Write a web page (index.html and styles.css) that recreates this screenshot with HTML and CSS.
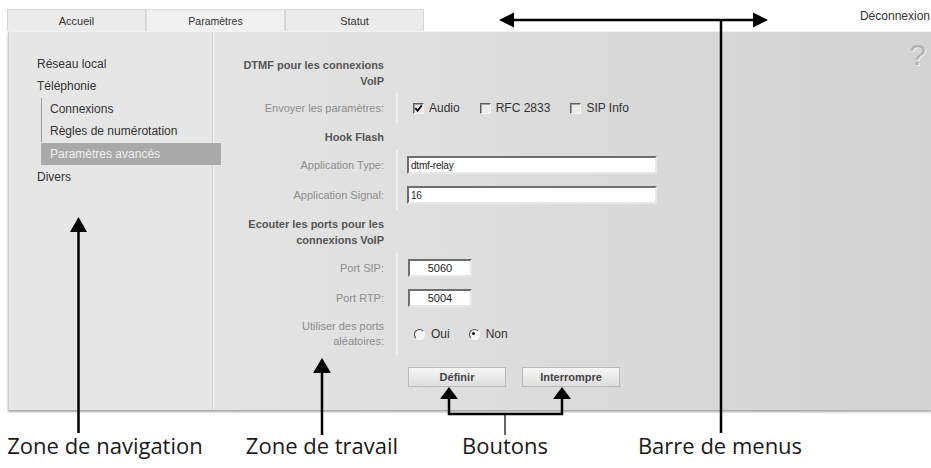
FILE: index.html
```html
<!DOCTYPE html>
<html lang="fr">
<head>
<meta charset="utf-8">
<title>Paramètres – Téléphonie</title>
<link rel="stylesheet" href="styles.css">
</head>
<body>
<div class="page">
  <div class="topbar">
    <nav class="tabs">
      <span class="tab">Accueil</span>
      <span class="tab active">Paramètres</span>
      <span class="tab">Statut</span>
    </nav>
    <span class="logout">Déconnexion</span>
  </div>

  <div class="panel">
    <aside class="nav">
      <div class="nav-item">Réseau local</div>
      <div class="nav-item">Téléphonie</div>
      <div class="subnav">
        <div class="sub-item">Connexions</div>
        <div class="sub-item">Règles de numérotation</div>
        <div class="sub-item active">Paramètres avancés</div>
      </div>
      <div class="nav-item">Divers</div>
    </aside>

    <main class="work">
      <div class="form">
        <div class="label head">DTMF pour les connexions<br>VoIP</div>
        <div class="blank"></div>

        <div class="label">Envoyer les paramètres:</div>
        <div class="field">
          <span class="opt"><span class="check"><svg viewBox="0 0 9 9" width="9" height="9"><path d="M1.3 4.2 L3.6 6.8 L7.8 1.4" stroke="#111" stroke-width="1.9" fill="none"/></svg></span>Audio</span>
          <span class="opt"><span class="check"></span>RFC 2833</span>
          <span class="opt"><span class="check"></span>SIP Info</span>
        </div>

        <div class="label head">Hook Flash</div>
        <div class="blank"></div>

        <div class="label">Application Type:</div>
        <div class="field"><input class="txt" type="text" value="dtmf-relay" readonly></div>

        <div class="label">Application Signal:</div>
        <div class="field"><input class="txt" type="text" value="16" readonly></div>

        <div class="label head">Ecouter les ports pour les<br>connexions VoIP</div>
        <div class="blank"></div>

        <div class="label">Port SIP:</div>
        <div class="field"><input class="port" type="text" value="5060" readonly></div>

        <div class="label">Port RTP:</div>
        <div class="field"><input class="port" type="text" value="5004" readonly></div>

        <div class="label">Utiliser des ports<br>aléatoires:</div>
        <div class="field">
          <span class="opt radio-opt"><span class="radio"></span>Oui</span>
          <span class="opt radio-opt"><span class="radio on"></span>Non</span>
        </div>

        <div class="blank"></div>
        <div class="buttons">
          <button class="btn" type="button">Définir</button>
          <button class="btn" type="button">Interrompre</button>
        </div>
      </div>
      <div class="help">?</div>
    </main>
  </div>

  <div class="notes">
    <svg class="arrows" width="931" height="468" viewBox="0 0 931 468">
      <g stroke="#000" stroke-width="2.5" fill="none">
        <line x1="78.5" y1="230" x2="78.5" y2="433"/>
        <line x1="322" y1="370" x2="322" y2="435"/>
        <polyline points="449,397 449,414 562,414 562,397"/>
        <line x1="510" y1="20" x2="757" y2="20"/>
        <line x1="721" y1="20" x2="721" y2="433"/>
      </g>
      <line x1="505" y1="414" x2="505" y2="435" stroke="#000" stroke-width="1.2"/>
      <g fill="#000">
        <polygon points="78.5,217 70,232 87,232"/>
        <polygon points="322,358 313,373 331,373"/>
        <polygon points="449,387 440,399 458,399"/>
        <polygon points="562,387 553,399 571,399"/>
        <polygon points="499,20 514,12.5 514,27.5"/>
        <polygon points="768,20 753,12.5 753,27.5"/>
      </g>
    </svg>
    <span class="note note-nav">Zone de navigation</span>
    <span class="note note-work">Zone de travail</span>
    <span class="note note-btn">Boutons</span>
    <span class="note note-menu">Barre de menus</span>
  </div>
</div>
</body>
</html>
```

FILE: styles.css
```css
* { box-sizing: border-box; }

html, body {
  margin: 0;
  padding: 0;
  background: #fff;
}

body {
  width: 931px;
  height: 468px;
  overflow: hidden;
  font-family: "Liberation Sans", Arial, sans-serif;
  color: #333;
}

.page {
  position: relative;
  width: 931px;
  height: 468px;
  padding-top: 9px;
}

/* ---------- top bar / tabs ---------- */
.topbar {
  display: flex;
  height: 22px;
  padding-left: 7px;
}

.tabs {
  display: flex;
}

.tab {
  width: 139px;
  height: 22px;
  line-height: 22px;
  text-align: center;
  font-size: 11px;
  color: #333;
  background: #ececec;
  border: 1px solid #d4d4d4;
  border-bottom: none;
}

.tab.active {
  background: #f1f1f1;
  border-color: #dcdcdc;
  font-size: 10.5px;
}

.logout {
  margin-left: auto;
  padding-right: 1px;
  font-size: 12px;
  line-height: 14px;
  color: #333;
}

/* ---------- panel ---------- */
.panel {
  display: grid;
  grid-template-columns: 204px 1fr;
  margin-left: 8px;
  height: 379px;
  border-top: 1px solid #f2f2f2;
  border-left: 1px solid #cdcdcd;
  box-shadow: 0 2px 2px rgba(0, 0, 0, 0.35);
  background: #e6e6e6;
}

/* ---------- navigation ---------- */
.nav {
  padding-top: 21px;
  padding-left: 28px;
  border-right: 1px solid #d3d3d3;
  font-size: 12px;
  color: #333;
}

.nav-item {
  line-height: 22px;
}

.subnav {
  margin: 1px 0 1px 4px;
}

.sub-item {
  line-height: 22px;
  padding-left: 8px;
  border-left: 1px solid #9c9c9c;
}

.sub-item.active {
  position: relative;
  z-index: 1;
  margin-top: 1px;
  margin-right: -9px;
  background: #a9a9a9;
  border-left-color: #a9a9a9;
  color: #efefef;
}

/* ---------- work area ---------- */
.work {
  display: flex;
  border-left: 1px solid #f3f3f3;
  background: linear-gradient(to right, #e4e4e4 0%, #dbdbdb 50%, #d3d3d3 100%);
  padding-left: 19px;
  padding-top: 25px;
}

.form {
  display: grid;
  grid-template-columns: 151px 262px;
  grid-template-rows: 36px 30px 27px 30px 30px 43px 30px 30px 42px auto;
  column-gap: 12px;
  font-size: 11px;
}

.label {
  display: flex;
  align-items: center;
  justify-content: flex-end;
  text-align: right;
  color: #8c8c8c;
  line-height: 15px;
}

.label.head {
  font-weight: bold;
  color: #555;
  line-height: 16px;
}

.form > .label.head:first-child {
  align-items: flex-start;
}

.field {
  display: flex;
  align-items: center;
  border-left: 2px solid #f1f1f1;
  padding-left: 10px;
}

.opt {
  display: inline-flex;
  align-items: center;
  font-size: 12px;
  color: #333;
  margin-right: 15px;
}

.check {
  display: inline-flex;
  align-items: center;
  justify-content: center;
  width: 11px;
  height: 11px;
  margin-left: 5px;
  margin-right: 5px;
  border: 1px solid;
  border-color: #5a5a5a #f6f6f6 #f6f6f6 #5a5a5a;
  background: #ececec;
  box-shadow: inset 1px 1px 0 #a0a0a0;
}

.radio-opt {
  margin-right: 13px;
}

.radio {
  position: relative;
  display: inline-block;
  width: 11px;
  height: 11px;
  margin-left: 6px;
  margin-right: 6px;
  border-radius: 50%;
  border: 1.5px solid;
  border-color: #4a4a4a #fafafa #fafafa #4a4a4a;
  background: #f4f4f4;
}

.radio.on::after {
  content: "";
  position: absolute;
  left: 2.5px;
  top: 2.5px;
  width: 3px;
  height: 3px;
  border-radius: 50%;
  background: #111;
}

.txt,
.port {
  height: 18px;
  margin: 0;
  border: 2px solid;
  border-color: #6e6e6e #e8e8e8 #e8e8e8 #6e6e6e;
  background: #fff;
  color: #222;
  font-family: "Liberation Sans", Arial, sans-serif;
  outline: none;
}

.txt {
  width: 250px;
  margin-left: -1px;
  padding: 0 2px;
  font-size: 10px;
  letter-spacing: -0.2px;
}

.port {
  width: 64px;
  padding: 0;
  text-align: center;
  font-size: 11px;
}

.buttons {
  display: flex;
  gap: 16px;
  padding-top: 12px;
  padding-left: 12px;
}

.btn {
  width: 98px;
  height: 20px;
  padding: 0;
  border: 1px solid #b9b9b9;
  background: linear-gradient(#f6f6f6, #dedede);
  color: #444;
  font-family: "Liberation Sans", Arial, sans-serif;
  font-size: 11px;
  font-weight: bold;
}

.help {
  margin-left: auto;
  margin-top: -17px;
  padding-right: 5px;
  font-size: 30px;
  line-height: 30px;
  color: #b2b2b2;
  text-shadow: 1px 1px 0 #f4f4f4;
}

/* ---------- annotations ---------- */
.notes {
  position: absolute;
  left: 0;
  top: 0;
  width: 931px;
  height: 468px;
  pointer-events: none;
}

.arrows {
  position: absolute;
  left: 0;
  top: 0;
}

.note {
  position: absolute;
  top: 430px;
  transform: translateX(-50%);
  white-space: nowrap;
  font-family: "Open Sans", "Noto Sans", sans-serif;
  font-size: 22px;
  line-height: 30px;
  color: #1a1a1a;
}

.note-nav { left: 105px; }
.note-work { left: 322px; }
.note-btn { left: 505px; }
.note-menu { left: 720px; }
```
